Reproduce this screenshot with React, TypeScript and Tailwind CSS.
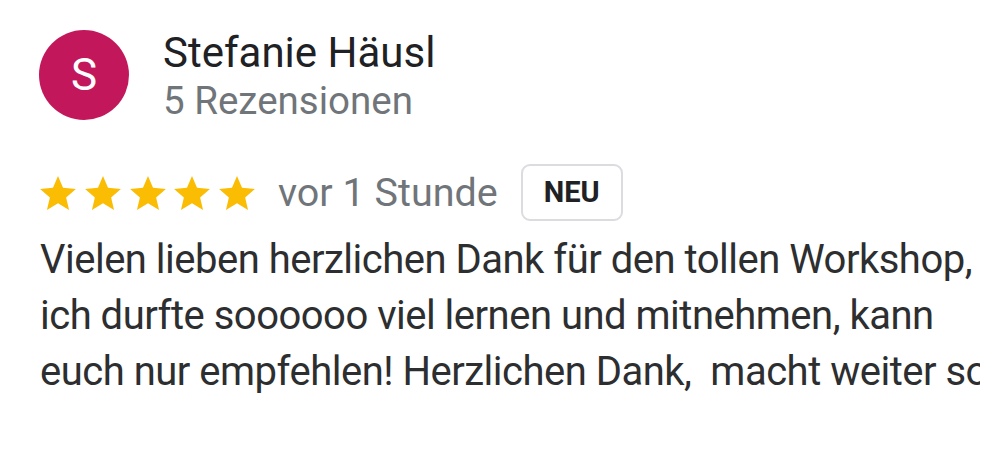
function StarIcon() {
  return (
    <svg viewBox="2 2 20 19" className="h-[34px] w-[36px]" fill="#fbbc04">
      <path d="M12 17.27L18.18 21l-1.64-7.03L22 9.24l-7.19-.61L12 2 9.19 8.63 2 9.24l5.46 4.73L5.82 21z" />
    </svg>
  );
}

export default function App() {
  return (
    <div className="h-[453px] w-[1000px] overflow-hidden bg-white font-['Roboto',sans-serif]">
      <div className="flex items-center gap-[34px] pl-[39px] pt-[27px]">
        <div className="flex h-[90px] w-[90px] items-center justify-center rounded-full bg-[#c2185b] text-[44px] text-white">
          S
        </div>
        <div className="flex flex-col">
          <span className="text-[42px] leading-[52px] text-[#202124]">Stefanie Häusl</span>
          <span className="text-[38.5px] leading-[44px] text-[#70757a]">5 Rezensionen</span>
        </div>
      </div>

      <div className="mt-[41px] flex items-center pl-[40px]">
        <div className="flex gap-[8.75px]">
          {[0, 1, 2, 3, 4].map((i) => (
            <StarIcon key={i} />
          ))}
        </div>
        <span className="ml-[23px] text-[39.5px] leading-[48px] text-[#70757a]">vor 1 Stunde</span>
        <span className="ml-[23px] flex h-[57px] w-[102px] items-center justify-center rounded-[9px] border-2 border-[#dadce0] text-[29px] font-bold text-[#202124]">
          NEU
        </span>
      </div>

      <div className="mt-[11px] w-[980px] overflow-hidden whitespace-nowrap pl-[40px] text-[40px] leading-[56px] tracking-[-0.5px] text-[#2d2e30]">
        <div>Vielen lieben herzlichen Dank für den tollen Workshop,</div>
        <div>ich durfte soooooo viel lernen und mitnehmen, kann</div>
        <div>euch nur empfehlen! Herzlichen Dank,&nbsp; macht weiter so</div>
      </div>
    </div>
  );
}
